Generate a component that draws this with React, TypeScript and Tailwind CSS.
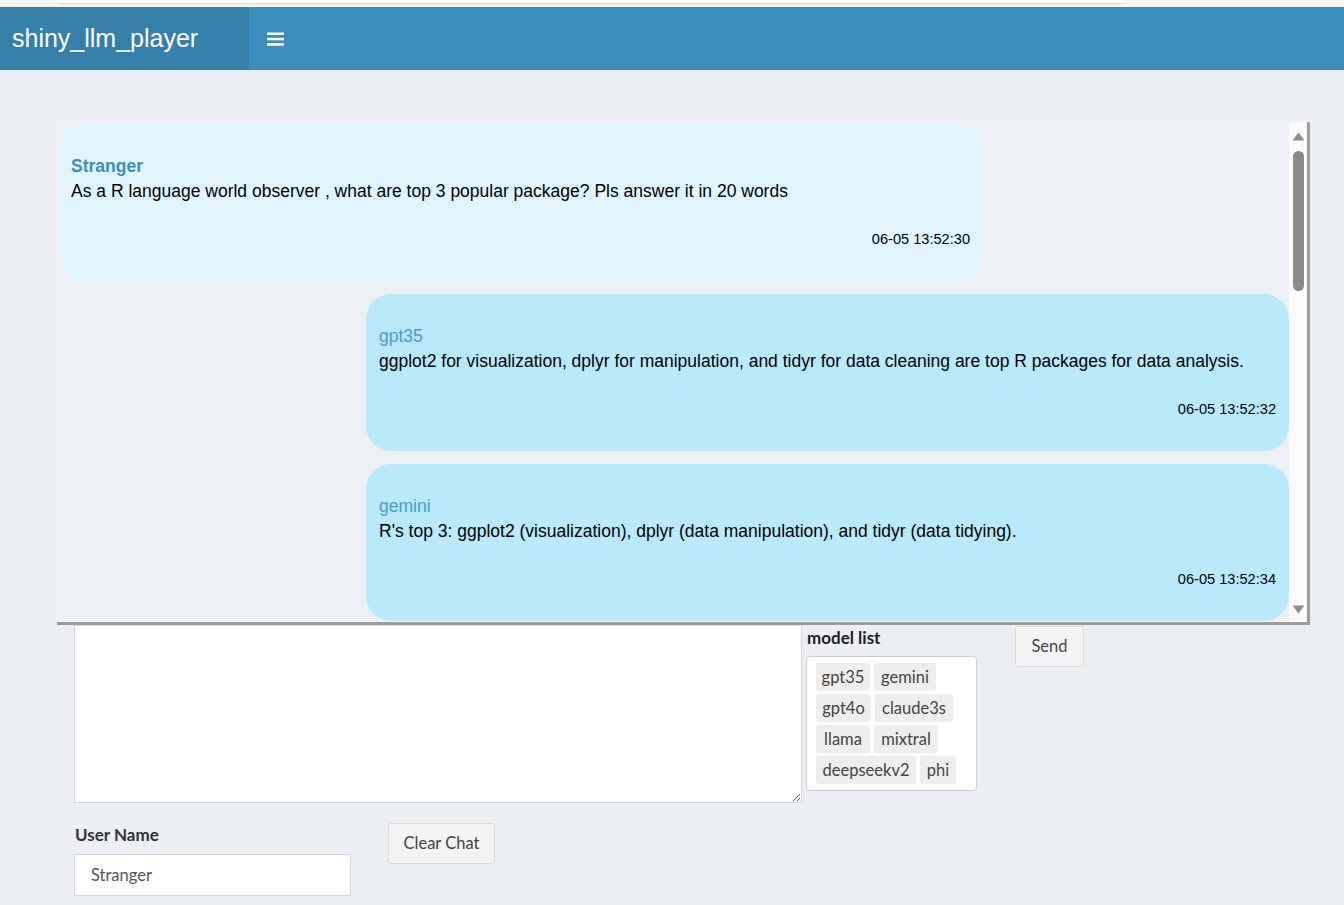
import { useState } from "react";

type Msg = {
  name: string;
  text: string;
  time: string;
  self: boolean;
};

const messages: Msg[] = [
  {
    name: "Stranger",
    text: "As a R language world observer , what are top 3 popular package? Pls answer it in 20 words",
    time: "06-05 13:52:30",
    self: true,
  },
  {
    name: "gpt35",
    text: "ggplot2 for visualization, dplyr for manipulation, and tidyr for data cleaning are top R packages for data analysis.",
    time: "06-05 13:52:32",
    self: false,
  },
  {
    name: "gemini",
    text: "R's top 3: ggplot2 (visualization), dplyr (data manipulation), and tidyr (data tidying).",
    time: "06-05 13:52:34",
    self: false,
  },
];

const models = [
  { name: "gpt35", w: "w-[54px]" },
  { name: "gemini", w: "w-[62px]" },
  { name: "gpt4o", w: "w-[55px]" },
  { name: "claude3s", w: "w-[78px]" },
  { name: "llama", w: "w-[54px]" },
  { name: "mixtral", w: "w-[64px]" },
  { name: "deepseekv2", w: "w-[100px]" },
  { name: "phi", w: "w-[36px]" },
];

const Bubble = ({ msg }: { msg: Msg }) => (
  <div
    className={
      msg.self
        ? "w-[921px] rounded-[25px] bg-[#e0f5fe] px-[11px] pt-[32px] pb-[32px]"
        : "ml-auto w-[923px] rounded-[25px] bg-[#b8eafc] px-[13px] pt-[32px] pb-[32px]"
    }
  >
    <div
      className={
        msg.self
          ? "mb-[5px] text-[17.5px] leading-5 font-bold text-[#3c8dbc]"
          : "mb-[5px] text-[17.5px] leading-5 text-[#4a9ccc]"
      }
    >
      {msg.name}
    </div>
    <div className="text-[17.5px] leading-5 text-black">{msg.text}</div>
    <div className="mt-[28px] text-right text-[14.6px] leading-5 text-black">{msg.time}</div>
  </div>
);

export default function App() {
  const [text, setText] = useState("");
  const [user, setUser] = useState("Stranger");

  return (
    <div className="min-h-[905px] bg-[#ecf0f5] font-['Liberation_Sans',Arial,sans-serif]">
      {/* browser strip */}
      <div className="h-[7px] bg-[#f6f6f6] pl-[58px]">
        <div className="h-[3px] w-[1067px] rounded-b bg-white shadow-[0_1px_2px_rgba(0,0,0,0.12)]" />
      </div>

      {/* header */}
      <div className="flex h-[63px] bg-[#3c8dbc]">
        <div className="flex w-[249px] items-center bg-[#367fa9] pl-[12px] text-[25px] text-white">
          shiny_llm_player
        </div>
        <div className="flex items-center pl-[18px]">
          <svg width="17" height="14" viewBox="0 0 17 14">
            <rect x="0" y="0.5" width="17" height="2.5" fill="#fff" />
            <rect x="0" y="5.8" width="17" height="2.5" fill="#fff" />
            <rect x="0" y="11.2" width="17" height="2.5" fill="#fff" />
          </svg>
        </div>
      </div>

      {/* chat panel */}
      <div className="ml-[57px] mt-[52px] flex h-[503px] w-[1253px] border-r-[3px] border-b-[3px] border-[#9d9d9d] bg-[#edf0f4]">
        <div className="flex flex-1 flex-col gap-[13px] overflow-hidden pt-[2px] pl-[3px]">
          {messages.map((m) => (
            <Bubble key={m.time} msg={m} />
          ))}
        </div>
        <div className="flex w-[18px] flex-col items-center bg-[#fafafa]">
          <svg className="mt-[10px]" width="13" height="9" viewBox="0 0 13 9">
            <path d="M6.5 0.5 L12.5 8.5 L0.5 8.5 Z" fill="#8c8c8c" />
          </svg>
          <div className="mt-[10px] h-[140px] w-[11px] rounded-full bg-[#8a8a8a]" />
          <div className="flex-1" />
          <svg className="mb-[8px]" width="13" height="9" viewBox="0 0 13 9">
            <path d="M0.5 0.5 L12.5 0.5 L6.5 8.5 Z" fill="#8c8c8c" />
          </svg>
        </div>
      </div>

      {/* inputs */}
      <div className="pl-[74px] font-['Lato','Open_Sans',sans-serif] text-[#333]">
        <div className="flex items-start">
          <textarea
            value={text}
            onChange={(e) => setText(e.target.value)}
            className="h-[178px] w-[728px] border border-[#d2d6de] bg-white px-3 py-2 text-base outline-none"
          />
          <div className="ml-[4px] w-[171px]">
            <div className="mt-[2px] h-[29px] pl-[1px] text-[17px] leading-[22px] font-bold text-[#222]">
              model list
            </div>
            <div className="flex h-[135px] flex-wrap content-start gap-x-[4px] gap-y-[3px] rounded-[4px] border border-[#cccccc] bg-white pt-[6px] pl-[9px] pr-[6px]">
              {models.map((m) => (
                <span
                  key={m.name}
                  className={`${m.w} flex h-[28px] items-center justify-center rounded-[3px] bg-[#eeeeee] text-[16.5px] text-[#444]`}
                >
                  {m.name}
                </span>
              ))}
            </div>
          </div>
          <button
            type="button"
            className="ml-[38px] mt-[1px] h-[41px] w-[69px] rounded-[3px] border border-[#dddddd] bg-[#f4f4f4] text-[16.5px] text-[#444]"
          >
            Send
          </button>
        </div>

        <div className="mt-[20px] flex items-start">
          <div>
            <div className="mb-[9px] mt-[2px] pl-[1px] text-[17px] leading-5 font-bold text-[#333]">
              User Name
            </div>
            <input
              value={user}
              onChange={(e) => setUser(e.target.value)}
              className="h-[42px] w-[277px] border border-[#d2d6de] bg-white px-[16px] text-[16.5px] text-[#555] outline-none"
            />
          </div>
          <button
            type="button"
            className="ml-[37px] h-[41px] w-[107px] rounded-[3px] border border-[#dddddd] bg-[#f4f4f4] text-[16.5px] text-[#444]"
          >
            Clear Chat
          </button>
        </div>
      </div>
    </div>
  );
}
